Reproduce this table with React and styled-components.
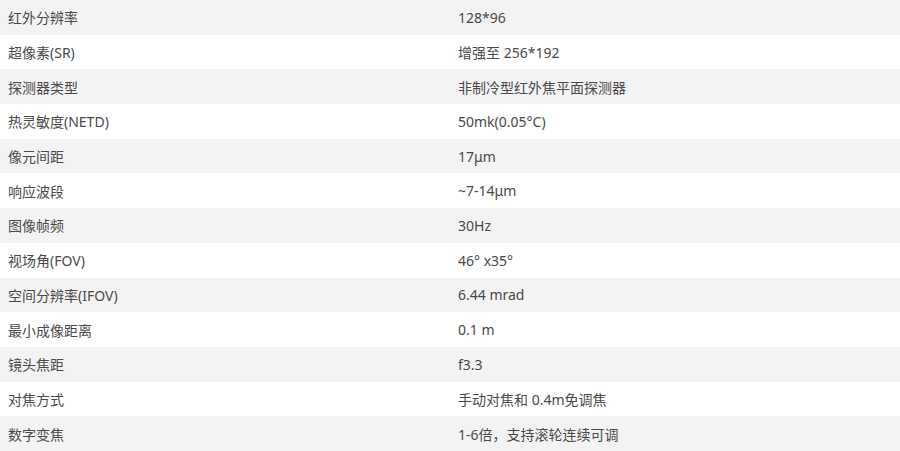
import React from "react";
import styled, { createGlobalStyle } from "styled-components";

const GlobalStyle = createGlobalStyle`
  body {
    margin: 0;
    background: #fff;
    font-family: "Noto Sans", "Noto Sans CJK SC", sans-serif;
  }
`;

const specs = [
  ["红外分辨率", "128*96"],
  ["超像素(SR)", "增强至 256*192"],
  ["探测器类型", "非制冷型红外焦平面探测器"],
  ["热灵敏度(NETD)", "50mk(0.05°C)"],
  ["像元间距", "17μm"],
  ["响应波段", "~7-14μm"],
  ["图像帧频", "30Hz"],
  ["视场角(FOV)", "46° x35°"],
  ["空间分辨率(IFOV)", "6.44 mrad"],
  ["最小成像距离", "0.1 m"],
  ["镜头焦距", "f3.3"],
  ["对焦方式", "手动对焦和 0.4m免调焦"],
  ["数字变焦", "1-6倍，支持滚轮连续可调"],
];

const Table = styled.div`
  width: 900px;
  display: flex;
  flex-direction: column;
`;

const Row = styled.div`
  display: grid;
  grid-template-columns: 1fr 1fr;
  align-items: center;
  height: 34.69px;
  background: ${(p) => (p.$shaded ? "#f3f3f3" : "#fff")};
`;

const Cell = styled.div`
  padding: 0 8px;
  font-size: 14px;
  color: #4a4a4a;
  white-space: nowrap;
`;

export default function App() {
  return (
    <>
      <GlobalStyle />
      <Table>
        {specs.map(([label, value], i) => (
          <Row key={label} $shaded={i % 2 === 0}>
            <Cell>{label}</Cell>
            <Cell>{value}</Cell>
          </Row>
        ))}
      </Table>
    </>
  );
}
